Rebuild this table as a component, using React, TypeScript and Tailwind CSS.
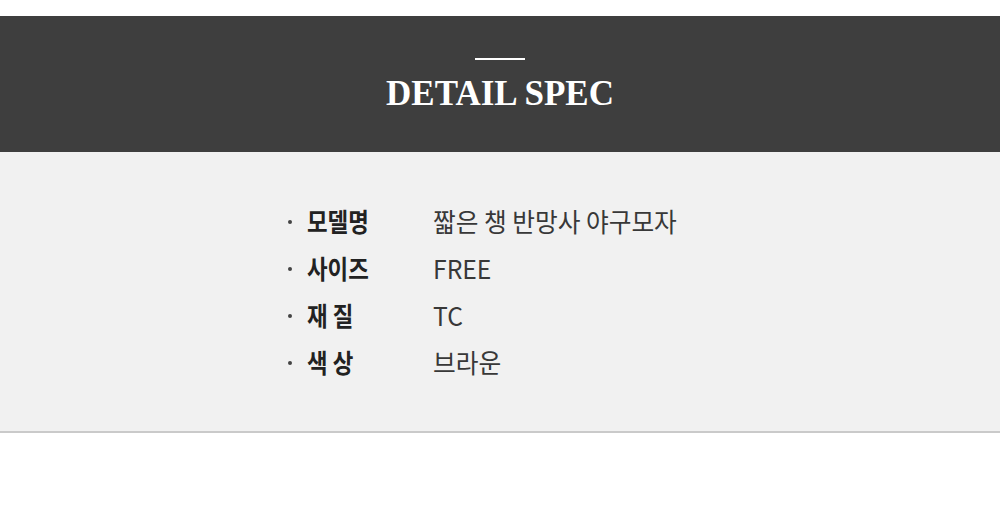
import React from "react";

const rows: { label: string; value: string }[] = [
  { label: "모델명", value: "짧은 챙 반망사 야구모자" },
  { label: "사이즈", value: "FREE" },
  { label: "재 질", value: "TC" },
  { label: "색 상", value: "브라운" },
];

export default function App() {
  return (
    <div className="w-[1000px] h-[505px] bg-white overflow-hidden">
      <div className="h-[16px] bg-white" />
      <div className="h-[136px] bg-[#3e3e3e] flex flex-col items-center pt-[42px]">
        <div className="w-[50px] h-[2px] bg-white" />
        <div
          className="mt-[16px] text-white text-[35px] leading-[35px] font-bold"
          style={{ fontFamily: '"Liberation Serif", "Times New Roman", serif' }}
        >
          DETAIL SPEC
        </div>
      </div>
      <div
        className="h-[281px] bg-[#f1f1f1] border-b-2 border-[#cacaca] pt-[45px] pl-[288px]"
        style={{ fontFamily: '"Noto Sans CJK KR", "Noto Sans", sans-serif' }}
      >
        {rows.map((r) => (
          <div key={r.label} className="flex items-center h-[47px]">
            <div className="w-[4px] h-[4px] rounded-full bg-[#444] mt-[3px]" />
            <div className="w-[126px] ml-[15px] text-[26px] leading-none font-bold text-[#222]">
              <span className="inline-block origin-left scale-x-[0.86] whitespace-pre">{r.label}</span>
            </div>
            <div className="text-[26px] leading-none text-[#383838]">
              <span className="inline-block origin-left scale-x-[0.95] whitespace-pre">{r.value}</span>
            </div>
          </div>
        ))}
      </div>
      <div className="bg-white" />
    </div>
  );
}
